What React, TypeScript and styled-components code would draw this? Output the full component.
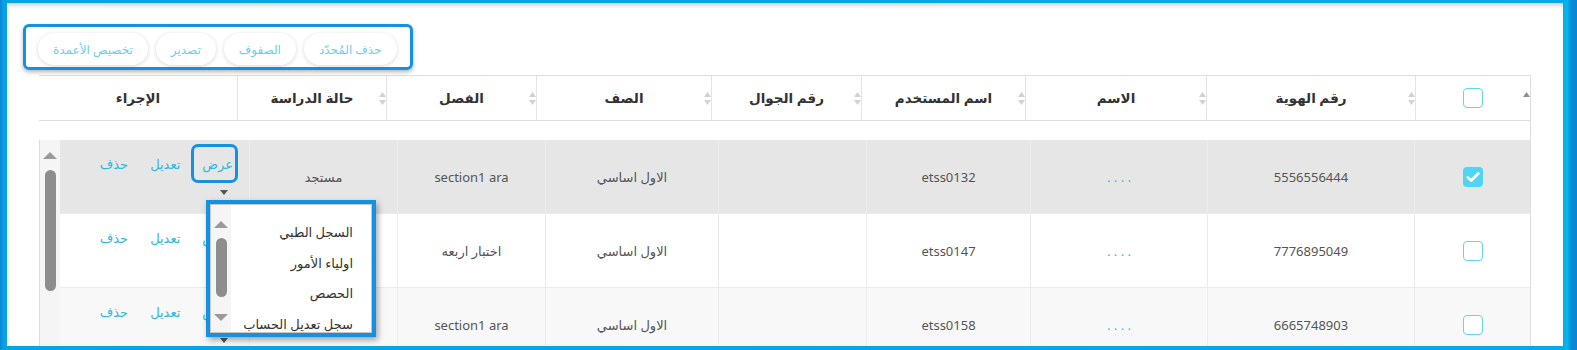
import styled, { createGlobalStyle } from "styled-components";

interface Student {
  id: string;
  username: string;
  grade: string;
  section: string;
  status: string;
  checked: boolean;
  tone: "selected" | "plain" | "striped";
}

const GlobalStyle = createGlobalStyle`
  html, body {
    margin: 0;
    padding: 0;
    height: 350px;
    overflow: hidden;
  }
  * { box-sizing: border-box; }
`;

const Frame = styled.div`
  height: 350px;
  padding: 3px 14px 4px 7px;
  background: linear-gradient(
    90deg,
    #0a86d3 0,
    #06a4e4 4px,
    #06a4e4 7px,
    #07a9e6 calc(100% - 14px),
    #02b8ec calc(100% - 10px),
    #0a8bd6 calc(100% - 6px),
    #0a86d3 100%
  );
`;

const Panel = styled.div`
  height: 343px;
  overflow: hidden;
  background: #fff;
  box-shadow: inset 0 5px 5px -3px rgba(0, 0, 0, 0.22);
  padding: 21px 32px 0 32px;
  direction: rtl;
  font-family: "Noto Sans", "DejaVu Sans", sans-serif;
`;

const ToolbarRow = styled.div`
  display: flex;
  justify-content: flex-end;
  margin-left: -16px;
`;

const ToolbarBox = styled.div`
  display: flex;
  gap: 8px;
  padding: 6px 13px 2px 12px;
  border: 3px solid #1690e0;
  border-radius: 6px;
  box-shadow: 0 2px 4px rgba(0, 0, 0, 0.3);
`;

const PillButton = styled.button`
  height: 32px;
  padding: 0 15px;
  border: none;
  border-radius: 16px;
  background: #fff;
  box-shadow: 0 1px 4px rgba(0, 0, 0, 0.16);
  color: #6ccdee;
  font-family: inherit;
  font-size: 12px;
`;

const Table = styled.div`
  margin-top: 5px;
`;

const headCols = "115px 209px 181px 164px 150px 175px 150px 149px 1fr";
const bodyCols = "116px 207px 177px 164px 148px 173px 148px 148px 1fr";

const HeadRow = styled.div`
  display: grid;
  grid-template-columns: ${headCols};
  height: 46px;
  border-top: 1px solid #dedede;
  border-bottom: 1px solid #dedede;
  border-right: 1px solid #dedede;
`;

const HeadCell = styled.div<{ $last?: boolean }>`
  display: grid;
  grid-template-columns: 18px 1fr 18px;
  align-items: center;
  border-left: ${(p) => (p.$last ? "none" : "1px solid #e3e3e3")};
  font-size: 13.5px;
  font-weight: 700;
  color: #333;
  text-align: center;
`;

const Spacer = styled.div`
  height: 19px;
  border-right: 1px solid #dedede;
`;

const Body = styled.div`
  display: flex;
  border-left: 1px solid #dedede;
  border-right: 1px solid #dedede;
`;

const Rows = styled.div`
  flex: 1;
`;

const toneBg = { selected: "#e6e6e6", plain: "#ffffff", striped: "#f8f8f8" };

const Row = styled.div<{ $tone: Student["tone"] }>`
  display: grid;
  grid-template-columns: ${bodyCols};
  height: 74px;
  background: ${(p) => toneBg[p.$tone]};
  border-bottom: 1px solid #ececec;
`;

const Cell = styled.div`
  display: flex;
  align-items: center;
  justify-content: center;
  border-left: 1px solid #ececec;
  font-size: 13px;
  color: #555;
`;

const Dots = styled.span`
  color: #2cc0e4;
  font-size: 13px;
`;

const ActionCell = styled.div`
  position: relative;
  display: flex;
  align-items: flex-start;
  gap: 22px;
  padding: 15px 16px 0;
`;

const ViewGroup = styled.div`
  display: flex;
  flex-direction: column;
  align-items: flex-start;
`;

const ActionLink = styled.a<{ $marked?: boolean }>`
  position: relative;
  display: block;
  line-height: 18px;
  font-size: 13px;
  color: #2cb9dd;
  cursor: pointer;

  &::after {
    content: "";
    display: ${(p) => (p.$marked ? "block" : "none")};
    position: absolute;
    top: -11px;
    bottom: -10px;
    left: -11px;
    right: -5px;
    border: 3px solid #1690e0;
    border-radius: 7px;
  }
`;

const Caret = styled.span`
  margin-top: 17px;
  margin-right: 5px;
  width: 0;
  height: 0;
  border-left: 4px solid transparent;
  border-right: 4px solid transparent;
  border-top: 5px solid #555;
`;

const Dropdown = styled.div`
  position: absolute;
  left: 146px;
  top: 60px;
  z-index: 5;
  width: 170px;
  height: 137px;
  display: flex;
  border: 4px solid #1690e0;
  background: #fff;
  box-shadow: inset 0 0 0 1px #c6c6c6, 2px 3px 6px rgba(0, 0, 0, 0.35);
  padding: 1px;
  overflow: hidden;
`;

const MenuList = styled.div`
  flex: 1;
  padding: 12px 18px 0 0;
`;

const MenuItem = styled.div`
  height: 30.5px;
  line-height: 30.5px;
  font-size: 13px;
  color: #333;
  white-space: nowrap;
`;

const ScrollTrack = styled.div<{ $pad: number }>`
  width: 20px;
  flex-shrink: 0;
  display: flex;
  flex-direction: column;
  align-items: center;
  padding-top: ${(p) => p.$pad}px;
  background: #f5f5f5;
`;

const Thumb = styled.div<{ $h: number; $gap: number }>`
  width: 11px;
  height: ${(p) => p.$h}px;
  margin-top: ${(p) => p.$gap}px;
  border-radius: 6px;
  background: #8d8d8d;
`;

const Box = styled.span<{ $checked?: boolean }>`
  display: flex;
  align-items: center;
  justify-content: center;
  width: 20px;
  height: 20px;
  border-radius: 4px;
  border: ${(p) => (p.$checked ? "none" : "1.5px solid #62d5ef")};
  background: ${(p) => (p.$checked ? "#4fd6f5" : "#fff")};
`;

const Arrow = ({ down, color = "#9a9a9a", mt = 0 }: { down?: boolean; color?: string; mt?: number }) => (
  <svg width="14" height="7" viewBox="0 0 14 7" style={{ marginTop: mt, display: "block" }}>
    <polygon points={down ? "0,0 14,0 7,7" : "0,7 14,7 7,0"} fill={color} />
  </svg>
);

const SortIcon = ({ single }: { single?: boolean }) =>
  single ? (
    <svg width="7" height="13" viewBox="0 0 7 13">
      <polygon points="0,5 3.5,0 7,5" fill="#8f8f8f" />
    </svg>
  ) : (
    <svg width="7" height="13" viewBox="0 0 7 13">
      <polygon points="0,5 3.5,0 7,5" fill="#d2d2d2" />
      <polygon points="0,8 3.5,13 7,8" fill="#d2d2d2" />
    </svg>
  );

const Check = () => (
  <svg width="14" height="12" viewBox="0 0 14 12">
    <path d="M1.8 6.4l3.4 3.2L12.2 2.4" fill="none" stroke="#fff" strokeWidth="2.8" strokeLinecap="round" strokeLinejoin="round" />
  </svg>
);

const headers = ["رقم الهوية", "الاسم", "اسم المستخدم", "رقم الجوال", "الصف", "الفصل", "حالة الدراسة"];

// status of rows 2 and 3 sits under the open menu
const students: Student[] = [
  { id: "5556556444", username: "etss0132", grade: "الاول اساسي", section: "section1 ara", status: "مستجد", checked: true, tone: "selected" },
  { id: "7776895049", username: "etss0147", grade: "الاول اساسي", section: "اختبار اربعه", status: "", checked: false, tone: "plain" },
  { id: "6665748903", username: "etss0158", grade: "الاول اساسي", section: "section1 ara", status: "", checked: false, tone: "striped" },
];

const menu = ["السجل الطبي", "اولياء الأمور", "الحصص", "سجل تعديل الحساب"];

function App() {
  return (
    <>
      <GlobalStyle />
      <Frame>
        <Panel>
          <ToolbarRow>
            <ToolbarBox>
              <PillButton>حذف المُحدّد</PillButton>
              <PillButton>الصفوف</PillButton>
              <PillButton>تصدير</PillButton>
              <PillButton>تخصيص الأعمدة</PillButton>
            </ToolbarBox>
          </ToolbarRow>

          <Table>
            <HeadRow>
              <HeadCell>
                <SortIcon single />
                <span style={{ justifySelf: "center" }}>
                  <Box />
                </span>
                <span />
              </HeadCell>
              {headers.map((h) => (
                <HeadCell key={h}>
                  <SortIcon />
                  <span>{h}</span>
                  <span />
                </HeadCell>
              ))}
              <HeadCell $last>
                <span />
                <span>الإجراء</span>
                <span />
              </HeadCell>
            </HeadRow>
            <Spacer />

            <Body>
              <Rows>
                {students.map((s, i) => (
                  <Row key={s.id} $tone={s.tone}>
                    <Cell>
                      <Box $checked={s.checked}>{s.checked && <Check />}</Box>
                    </Cell>
                    <Cell>{s.id}</Cell>
                    <Cell>
                      <Dots>. . . .</Dots>
                    </Cell>
                    <Cell>{s.username}</Cell>
                    <Cell />
                    <Cell>{s.grade}</Cell>
                    <Cell>{s.section}</Cell>
                    <Cell>{s.status}</Cell>
                    <ActionCell>
                      <ViewGroup>
                        <ActionLink $marked={i === 0}>عرض</ActionLink>
                        <Caret />
                      </ViewGroup>
                      <ActionLink>تعديل</ActionLink>
                      <ActionLink>حذف</ActionLink>
                      {i === 0 && (
                        <Dropdown>
                          <MenuList>
                            {menu.map((m) => (
                              <MenuItem key={m}>{m}</MenuItem>
                            ))}
                          </MenuList>
                          <ScrollTrack $pad={16}>
                            <Arrow />
                            <Thumb $h={59} $gap={10} />
                            <Arrow down mt={17} />
                          </ScrollTrack>
                        </Dropdown>
                      )}
                    </ActionCell>
                  </Row>
                ))}
              </Rows>
              <ScrollTrack $pad={12}>
                <Arrow />
                <Thumb $h={121} $gap={11} />
              </ScrollTrack>
            </Body>
          </Table>
        </Panel>
      </Frame>
    </>
  );
}

export default App;
